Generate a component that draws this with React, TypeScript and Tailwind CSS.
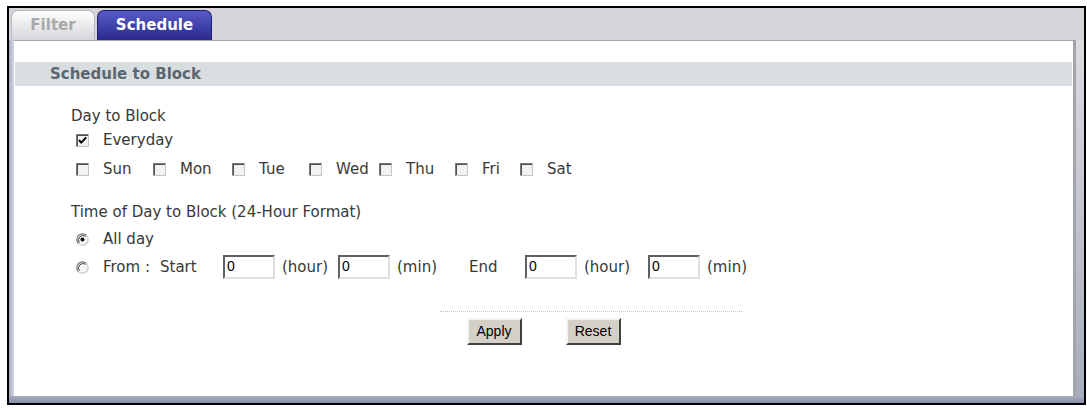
import React from 'react'

function Box({ checked = false }: { checked?: boolean }) {
  return (
    <span className="relative inline-block w-[13px] h-[13px] shrink-0 border border-t-[#7a7a7a] border-l-[#7a7a7a] border-b-[#c4c4c4] border-r-[#c4c4c4] bg-[#f2f2f2] shadow-[inset_1px_1px_0_#505050]">
      {checked && (
        <svg viewBox="0 0 11 11" className="absolute left-0 top-0 w-[11px] h-[11px]">
          <path d="M2 5 L4.3 7.6 L9.2 2.4" fill="none" stroke="#000" strokeWidth="1.9" />
        </svg>
      )}
    </span>
  )
}

function Radio({ checked = false }: { checked?: boolean }) {
  return (
    <svg viewBox="0 0 13 13" className="w-[13px] h-[13px] shrink-0">
      <circle cx="6.5" cy="6.5" r="5.8" fill="#f6f6f6" />
      <path d="M10.6 2.4 A5.8 5.8 0 0 0 2.4 10.6" fill="none" stroke="#7a7a7a" strokeWidth="1.2" />
      <path d="M9.7 3.3 A4.6 4.6 0 0 0 3.3 9.7" fill="none" stroke="#404040" strokeWidth="1" />
      <path d="M2.4 10.6 A5.8 5.8 0 0 0 10.6 2.4" fill="none" stroke="#c8c8c8" strokeWidth="1.2" />
      {checked && <circle cx="6.5" cy="6.5" r="2" fill="#000" />}
    </svg>
  )
}

function NumInput() {
  return (
    <input
      type="text"
      defaultValue="0"
      className="w-[52px] h-[24px] shrink-0 bg-white border-2 border-t-[#606060] border-l-[#606060] border-b-[#e0e0e0] border-r-[#e0e0e0] pl-[2px] pb-[2px] font-['Liberation_Sans',Arial,sans-serif] text-[14px] text-black outline-none"
    />
  )
}

function BevelButton({ label }: { label: string }) {
  return (
    <button className="w-[55px] h-[27px] bg-[#d4d0c8] border-2 border-t-[#f4f4f4] border-l-[#f4f4f4] border-b-[#404040] border-r-[#404040] font-['Liberation_Sans',Arial,sans-serif] text-[14px] text-black">
      {label}
    </button>
  )
}

const days = [
  { name: 'Sun', w: 'w-[77px]' },
  { name: 'Mon', w: 'w-[79px]' },
  { name: 'Tue', w: 'w-[77px]' },
  { name: 'Wed', w: 'w-[70px]' },
  { name: 'Thu', w: 'w-[76px]' },
  { name: 'Fri', w: 'w-[65px]' },
  { name: 'Sat', w: 'w-[60px]' },
]

export default function App() {
  return (
    <div className="w-[1087px] h-[410px] bg-white pt-[6px] pl-[7px] font-['DejaVu_Sans',Verdana,sans-serif] text-[15px] text-[#383838]">
      <div className="w-[1079px] h-[399px] border-2 border-black bg-[#d6d4d9] flex flex-col">
        {/* Tabs */}
        <div className="h-[32px] flex items-end pl-[2px] gap-[2px] shrink-0">
          <div className="w-[84px] h-[30px] rounded-t-[7px] border border-b-0 border-[#b8b8c0] bg-gradient-to-b from-[#ffffff] to-[#d6d6da] flex items-center justify-center font-bold text-[#a8a8a8]">
            Filter
          </div>
          <div className="w-[115px] h-[30px] rounded-t-[7px] border border-b-0 border-[#1e1e78] bg-gradient-to-b from-[#5a5ac8] to-[#2a2a8e] flex items-center justify-center font-bold text-white">
            Schedule
          </div>
        </div>

        {/* Panel */}
        <div className="flex-1 flex">
          <div className="w-[5px] bg-gradient-to-r from-[#a6aabb] to-[#d8d8e0]" />
          <div className="flex-1 bg-white border-t border-[#a8a8b0] flex flex-col">
            <div className="mt-[21px] mx-[1px] h-[24px] bg-[#d8dee0] flex items-center pl-[35px] font-bold text-[#5c6672]">
              Schedule to Block
            </div>

            <div className="pl-[57px] flex flex-col">
              <div className="mt-[18px] h-[24px] flex items-center">Day to Block</div>
              <div className="h-[24px] flex items-center pl-[5px]">
                <span className="w-[27px] flex"><Box checked /></span>
                <span>Everyday</span>
              </div>
              <div className="mt-[5px] h-[24px] flex items-center pl-[5px]">
                {days.map((d) => (
                  <div key={d.name} className={`${d.w} flex items-center`}>
                    <span className="w-[27px] flex"><Box /></span>
                    <span>{d.name}</span>
                  </div>
                ))}
              </div>

              <div className="mt-[19px] h-[24px] flex items-center">Time of Day to Block (24-Hour Format)</div>
              <div className="mt-[3px] h-[24px] flex items-center pl-[5px]">
                <span className="w-[27px] flex"><Radio checked /></span>
                <span>All day</span>
              </div>
              <div className="mt-[4px] h-[24px] flex items-center pl-[5px]">
                <span className="w-[27px] flex"><Radio /></span>
                <span className="w-[57px]">From :</span>
                <span className="w-[63px]">Start</span>
                <NumInput />
                <span className="w-[63px] pl-[7px]">(hour)</span>
                <NumInput />
                <span className="w-[79px] pl-[7px]">(min)</span>
                <span className="w-[56px]">End</span>
                <NumInput />
                <span className="w-[71px] pl-[7px]">(hour)</span>
                <NumInput />
                <span className="pl-[7px]">(min)</span>
              </div>
            </div>

            <div className="mt-[32px] ml-[426px] w-[302px] border-t border-dotted border-[#c4c4c4]" />
            <div className="mt-[6px] flex justify-center gap-[44px]">
              <BevelButton label="Apply" />
              <BevelButton label="Reset" />
            </div>
          </div>
          <div className="w-[11px] flex">
            <div className="w-[3px] bg-[#a4a4ac]" />
            <div className="flex-1 bg-gradient-to-b from-[#dcdce0] to-[#a8acbc]" />
          </div>
        </div>
        <div className="h-[7px] shrink-0 bg-gradient-to-b from-[#a8acbc] to-[#8a90a6]" />
      </div>
    </div>
  )
}
